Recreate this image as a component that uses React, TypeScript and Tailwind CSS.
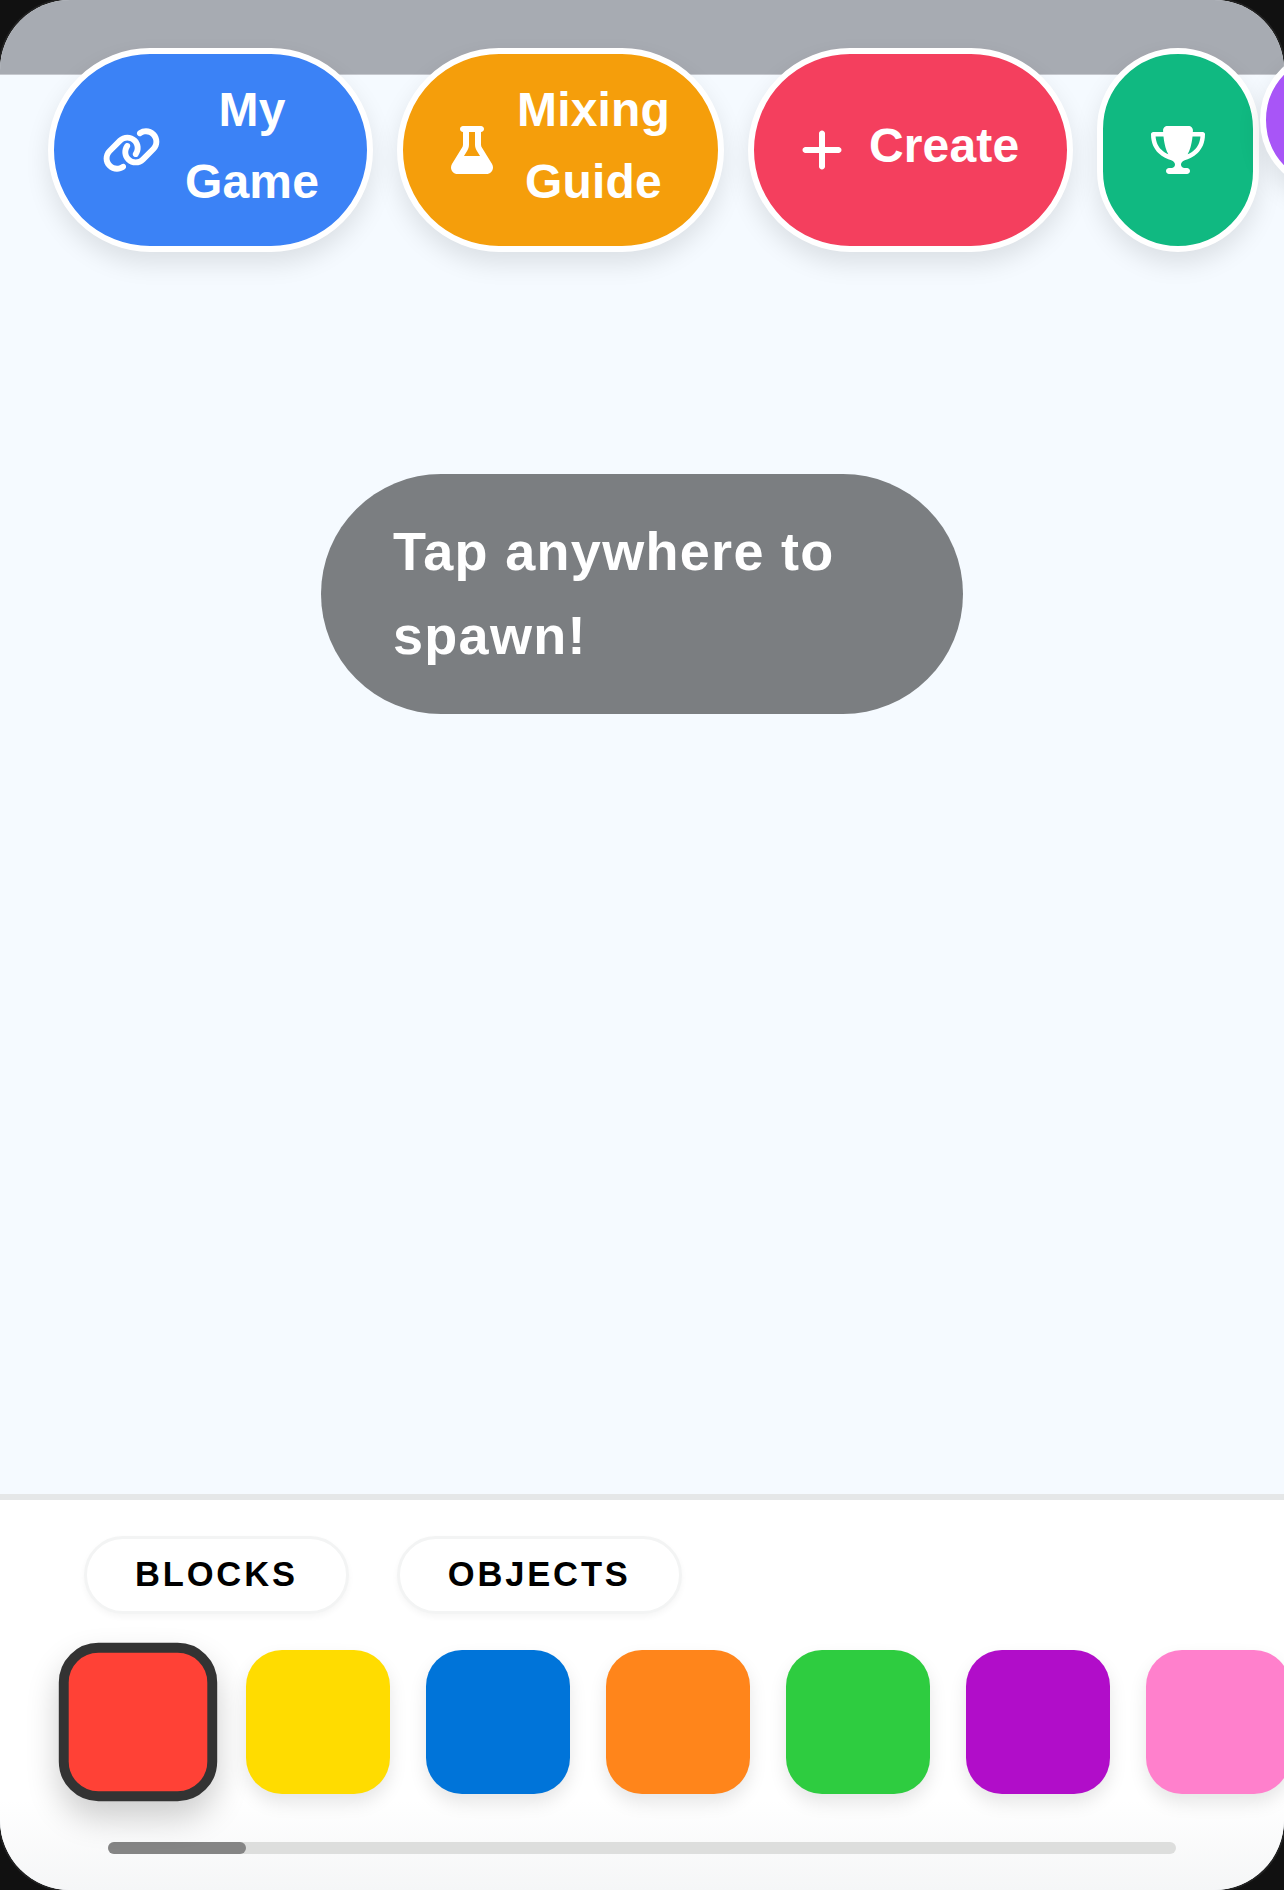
import { FaFlask, FaLink, FaPlus, FaTrophy } from "react-icons/fa6";

const swatches = [
  "bg-[#ffdc00]",
  "bg-[#0074d9]",
  "bg-[#ff851b]",
  "bg-[#2ecc40]",
  "bg-[#b10dc9]",
  "bg-[#ff80cc]",
];

function ActionButton({
  color,
  icon,
  label,
}: {
  color: string;
  icon: React.ReactNode;
  label?: React.ReactNode;
}) {
  return (
    <button
      className={`flex h-[204px] shrink-0 items-center gap-6 rounded-[102px] border-[6px] border-white px-12 text-white shadow-[0_12px_24px_rgba(0,0,0,0.1)] ${color}`}
    >
      {icon}
      {label && (
        <span className="pb-[9px] text-center text-[48px] leading-[72px] font-bold tracking-[0.15px]">
          {label}
        </span>
      )}
    </button>
  );
}

export default function App() {
  return (
    <div className="h-[1890px] w-[1284px] overflow-hidden bg-[#111111] font-['Liberation_Sans',sans-serif]">
      <div className="relative flex h-full flex-col overflow-hidden rounded-[70px] bg-[#f5faff] shadow-[0_0_0_2px_#222222]">
        {/* Top bar and its buttons */}
        <div className="h-[75px] shrink-0 border-b border-[#c5c8ce] bg-[#a7abb2]" />
        <div className="absolute top-12 left-12 flex gap-6">
          <ActionButton
            color="bg-[#3b82f6]"
            icon={<FaLink className="h-12 w-[59px] shrink-0" />}
            label={
              <>
                My
                <br />
                Game
              </>
            }
          />
          <ActionButton
            color="bg-[#f59e0b]"
            icon={<FaFlask className="h-12 w-[42px] shrink-0" />}
            label={
              <>
                Mixing
                <br />
                Guide
              </>
            }
          />
          <ActionButton
            color="bg-[#f43f5e]"
            icon={<FaPlus className="mr-[2px] -ml-px h-12 w-[42px] shrink-0" />}
            label="Create"
          />
          <ActionButton
            color="bg-[#10b981]"
            icon={<FaTrophy className="h-12 w-[54px] shrink-0" />}
          />
          {/* Next button, cut off by the screen edge */}
          <div className="-ml-[23px] size-36 shrink-0 rounded-full border-[6px] border-white bg-[#a855f7] shadow-[0_12px_24px_rgba(0,0,0,0.1)]" />
        </div>

        {/* Canvas */}
        <div className="flex flex-1 justify-center pt-[399px]">
          <div className="h-[240px] w-[642px] rounded-[120px] bg-[#7b7e81] px-[72px] pt-[35px] text-[54px] leading-[84px] font-bold tracking-[1.3px] text-white">
            Tap anywhere to spawn!
          </div>
        </div>

        {/* Palette */}
        <div className="h-[396px] shrink-0 border-t-[6px] border-[#e5e7e8] bg-linear-to-b from-white from-[77%] to-[#f5f6f7]">
          <div className="flex gap-12 pt-9 pl-[84px]">
            <button className="h-[78px] rounded-[39px] border-[3px] border-[#f3f4f4] bg-white px-12 text-[34.5px] font-bold tracking-[2.85px] text-black shadow-[0_3px_6px_rgba(0,0,0,0.04)]">
              BLOCKS
            </button>
            <button className="h-[78px] rounded-[39px] border-[3px] border-[#f3f4f4] bg-white px-12 text-[34.5px] font-bold tracking-[2.85px] text-black shadow-[0_3px_6px_rgba(0,0,0,0.04)]">
              OBJECTS
            </button>
          </div>
          <div className="mt-9 flex gap-9 pl-[66px]">
            <div className="size-36 shrink-0 scale-110 rounded-[36px] border-9 border-[#333333] bg-[#ff4136] shadow-[0_15px_30px_rgba(0,0,0,0.2)]" />
            {swatches.map((swatch) => (
              <div
                key={swatch}
                className={`size-36 shrink-0 rounded-[36px] shadow-[0_9px_18px_rgba(0,0,0,0.1)] ${swatch}`}
              />
            ))}
          </div>
          <div className="mx-[108px] mt-12 h-3 rounded-md bg-[#dddedd]">
            <div className="h-3 w-[138px] rounded-md bg-[#858585]" />
          </div>
        </div>
      </div>
    </div>
  );
}
